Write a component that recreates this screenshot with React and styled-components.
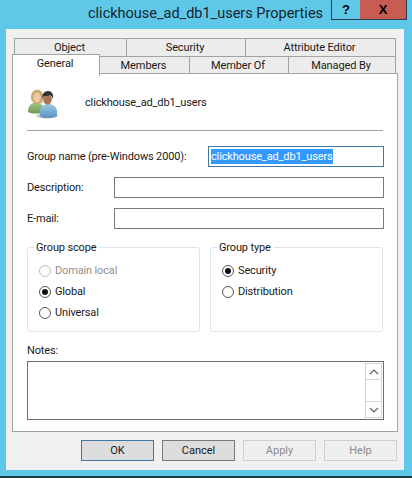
import React from "react";
import styled, { createGlobalStyle } from "styled-components";

const UI_FONT = `"Roboto", "Noto Sans", sans-serif`;

const GlobalStyle = createGlobalStyle`
  html, body {
    margin: 0;
    padding: 0;
    background: #5fc8e8;
  }
  * {
    box-sizing: border-box;
  }
`;

const GroupIcon = () => (
  <svg width="32" height="32" viewBox="0 0 32 32">
    <defs>
      <linearGradient id="shirtGreen" x1="0" y1="0" x2="0" y2="1">
        <stop offset="0" stopColor="#a9c98a" />
        <stop offset="1" stopColor="#6f9a55" />
      </linearGradient>
      <linearGradient id="shirtBlue" x1="0" y1="0" x2="0" y2="1">
        <stop offset="0" stopColor="#9cc8e6" />
        <stop offset="1" stopColor="#5a93c2" />
      </linearGradient>
    </defs>
    <ellipse cx="20" cy="29" rx="11" ry="2.5" fill="#c8c8c8" />
    <path d="M1 25c0-6 3-9 8-10l4 1 3 3v6c-4 2-11 2-15 0z" fill="url(#shirtGreen)" />
    <path d="M5 14c-2-4-1-10 4-11 4-1 7 2 7 6 0 3 0 5-1 7l-3 1H8z" fill="#c9ab74" />
    <ellipse cx="10" cy="10.5" rx="3.6" ry="4.8" fill="#ecc9a0" />
    <path d="M14 30c-1-1-2-3-1-7 1-4 4-5 7-6h3c4 1 7 3 7 8v4c-3 2-12 3-16 1z" fill="url(#shirtBlue)" />
    <ellipse cx="20.5" cy="12" rx="4.4" ry="5.6" fill="#a8775a" />
    <path d="M15.5 12c-1-5 2-8 5.500-8s6 3 5 8c-1-3-2-3.500-3-4-2 1-5 1-6 1-1 1-1 2-1.500 3z" fill="#2e3237" />
  </svg>
);

const Window = styled.div`
  width: 412px;
  height: 478px;
  display: flex;
  flex-direction: column;
  background: #5fc8e8;
  border-bottom: 2px solid #1f3b46;
`;

const TitleBar = styled.div`
  height: 29px;
  flex: none;
  display: flex;
  justify-content: space-between;
  padding: 0 5px 0 88px;
`;

const Title = styled.div`
  font: 14.5px/28px ${UI_FONT};
  color: #15252c;
  white-space: nowrap;
`;

const CaptionButtons = styled.div`
  display: flex;
  height: 20px;
  border: 1px solid #24404c;
  border-top: none;
`;

const CaptionButton = styled.div`
  width: ${(p) => p.$width}px;
  background: ${(p) => p.$bg};
  display: flex;
  align-items: center;
  justify-content: center;
  font: bold 13px/1 "Liberation Sans", sans-serif;
  color: #000;
`;

const Client = styled.div`
  flex: 1;
  margin: 0 8px 6px 6px;
  padding: 9px 6px 0;
  background: #f0f0f0;
  display: flex;
  flex-direction: column;
`;

const TabRow = styled.div`
  display: flex;
  height: ${(p) => p.$height}px;
  padding-left: ${(p) => p.$indent}px;
  font: 11px/1 ${UI_FONT};
  letter-spacing: -0.1px;
  color: #1a1a1a;
  white-space: nowrap;
`;

const Tab = styled.div`
  width: ${(p) => p.$width}px;
  display: flex;
  align-items: center;
  justify-content: center;
  padding-right: 2px;
  background: #ececec;
  border: 1px solid #a3a3a3;
  border-left-width: ${(p) => (p.$first ? 1 : 0)}px;
  border-bottom: none;
`;

const ActiveTab = styled.div`
  width: ${(p) => p.$width}px;
  height: 22px;
  margin-top: -2px;
  padding: 0 2px 4px 0;
  display: flex;
  align-items: center;
  justify-content: center;
  background: #fff;
  border: 1px solid #a3a3a3;
  border-bottom: none;
  position: relative;
  z-index: 1;
`;

const Panel = styled.div`
  width: 386px;
  height: 359px;
  flex: none;
  padding: 0 13px 0 14px;
  background: #fff;
  border: 1px solid #a3a3a3;
  margin-top: -1px;
  font: 11px/1 ${UI_FONT};
  letter-spacing: -0.15px;
  color: #1a1a1a;
  white-space: nowrap;
`;

const Header = styled.div`
  height: 57px;
  margin-right: 1px;
  display: flex;
  align-items: center;
  gap: 26px;
  padding-top: 1px;
  border-bottom: 1px solid #a0a0a0;
`;

const Form = styled.div`
  padding-top: 15px;
  display: flex;
  flex-direction: column;
  gap: 10px;
`;

const FieldRow = styled.div`
  display: flex;
  align-items: center;
  justify-content: space-between;
`;

const FieldLabel = styled.span`
  padding-bottom: 1px;
`;

const Input = styled.div`
  width: ${(p) => p.$width}px;
  height: 21px;
  border: 1px solid ${(p) => (p.$focused ? "#3f77a8" : "#7a7a7a")};
  padding: 2px;
  background: #fff;
`;

const Selected = styled.span`
  display: inline-block;
  height: 15px;
  line-height: 15px;
  background: #3399ff;
  color: #fff;
`;

const Groups = styled.div`
  display: flex;
  justify-content: space-between;
  margin-top: 13px;
  padding-right: 1px;
`;

const GroupBox = styled.fieldset`
  width: ${(p) => p.$width}px;
  height: 90px;
  margin: 0;
  padding: 11px 0 0 11px;
  border: 1px solid #dce4ec;
  border-radius: 3px;
  display: flex;
  flex-direction: column;
  gap: 8px;
`;

const Legend = styled.legend`
  margin-left: -5px;
  padding: 0 3px 0 2px;
`;

const RadioRow = styled.div`
  display: flex;
  align-items: center;
  gap: 4px;
  height: 13px;
  color: ${(p) => (p.$disabled ? "#8f8f8f" : "#1a1a1a")};
`;

const Radio = styled.span`
  width: 12px;
  height: 12px;
  flex: none;
  border-radius: 50%;
  border: 1px solid ${(p) => (p.$disabled ? "#bcbcbc" : "#555")};
  background: #fff;
  display: flex;
  align-items: center;
  justify-content: center;

  &::after {
    content: "";
    display: ${(p) => (p.$checked ? "block" : "none")};
    width: 6px;
    height: 6px;
    border-radius: 50%;
    background: #111;
  }
`;

const NotesLabel = styled.div`
  margin-top: 13px;
  height: 16px;
`;

const NotesBox = styled.div`
  height: 59px;
  border: 1px solid #6e6e6e;
  padding: 1px;
  display: flex;
  justify-content: flex-end;
`;

const ScrollBar = styled.div`
  width: 17px;
  display: flex;
  flex-direction: column;
  justify-content: space-between;
  border: 1px solid #d6d6d6;
`;

const ScrollButton = styled.div`
  height: 16px;
  display: flex;
  align-items: center;
  justify-content: center;
  border-top: ${(p) => (p.$down ? "1px solid #d6d6d6" : "none")};
  border-bottom: ${(p) => (p.$down ? "none" : "1px solid #d6d6d6")};
`;

const ButtonRow = styled.div`
  display: flex;
  justify-content: flex-end;
  gap: 8px;
  margin-top: 8px;
  width: 385px;
`;

const Button = styled.div`
  width: 73px;
  height: 21px;
  display: flex;
  align-items: center;
  justify-content: center;
  font: 11px/1 ${UI_FONT};
  color: ${(p) => (p.$disabled ? "#8c8c8c" : "#1a1a1a")};
  background: ${(p) => (p.$disabled ? "#efefef" : "#dddddd")};
  border: 1px solid ${(p) => (p.$default ? "#3f77a8" : p.$disabled ? "#cfcfcf" : "#7a7a7a")};
`;

const Chevron = ({ down }) => (
  <svg width="10" height="6" viewBox="0 0 10 6">
    <path d={down ? "M1 1l4 4 4-4" : "M1 5l4-4 4 4"} fill="none" stroke="#606060" strokeWidth="1.200" />
  </svg>
);

export default function App() {
  return (
    <Window>
      <GlobalStyle />
      <TitleBar>
        <Title>clickhouse_ad_db1_users Properties</Title>
        <CaptionButtons>
          <CaptionButton $width={28} $bg="#5fc8e8">?</CaptionButton>
          <CaptionButton $width={46} $bg="#c75c52">X</CaptionButton>
        </CaptionButtons>
      </TitleBar>
      <Client>
        <TabRow $height={18} $indent={2}>
          <Tab $first $width={113}>Object</Tab>
          <Tab $width={119}>Security</Tab>
          <Tab $width={150}>Attribute Editor</Tab>
        </TabRow>
        <TabRow $height={18} $indent={0}>
          <ActiveTab $width={88}>General</ActiveTab>
          <Tab $width={90}>Members</Tab>
          <Tab $width={99}>Member Of</Tab>
          <Tab $width={107}>Managed By</Tab>
        </TabRow>
        <Panel>
          <Header>
            <GroupIcon />
            <span>clickhouse_ad_db1_users</span>
          </Header>
          <Form>
            <FieldRow>
              <FieldLabel>Group name (pre-Windows 2000):</FieldLabel>
              <Input $width={176} $focused>
                <Selected>clickhouse_ad_db1_users</Selected>
              </Input>
            </FieldRow>
            <FieldRow>
              <FieldLabel>Description:</FieldLabel>
              <Input $width={270} />
            </FieldRow>
            <FieldRow>
              <FieldLabel>E-mail:</FieldLabel>
              <Input $width={270} />
            </FieldRow>
          </Form>
          <Groups>
            <GroupBox $width={173}>
              <Legend>Group scope</Legend>
              <RadioRow $disabled><Radio $disabled />Domain local</RadioRow>
              <RadioRow><Radio $checked />Global</RadioRow>
              <RadioRow><Radio />Universal</RadioRow>
            </GroupBox>
            <GroupBox $width={173}>
              <Legend>Group type</Legend>
              <RadioRow><Radio $checked />Security</RadioRow>
              <RadioRow><Radio />Distribution</RadioRow>
            </GroupBox>
          </Groups>
          <NotesLabel>Notes:</NotesLabel>
          <NotesBox>
            <ScrollBar>
              <ScrollButton><Chevron /></ScrollButton>
              <ScrollButton $down><Chevron down /></ScrollButton>
            </ScrollBar>
          </NotesBox>
        </Panel>
        <ButtonRow>
          <Button $default>OK</Button>
          <Button>Cancel</Button>
          <Button $disabled>Apply</Button>
          <Button $disabled>Help</Button>
        </ButtonRow>
      </Client>
    </Window>
  );
}
